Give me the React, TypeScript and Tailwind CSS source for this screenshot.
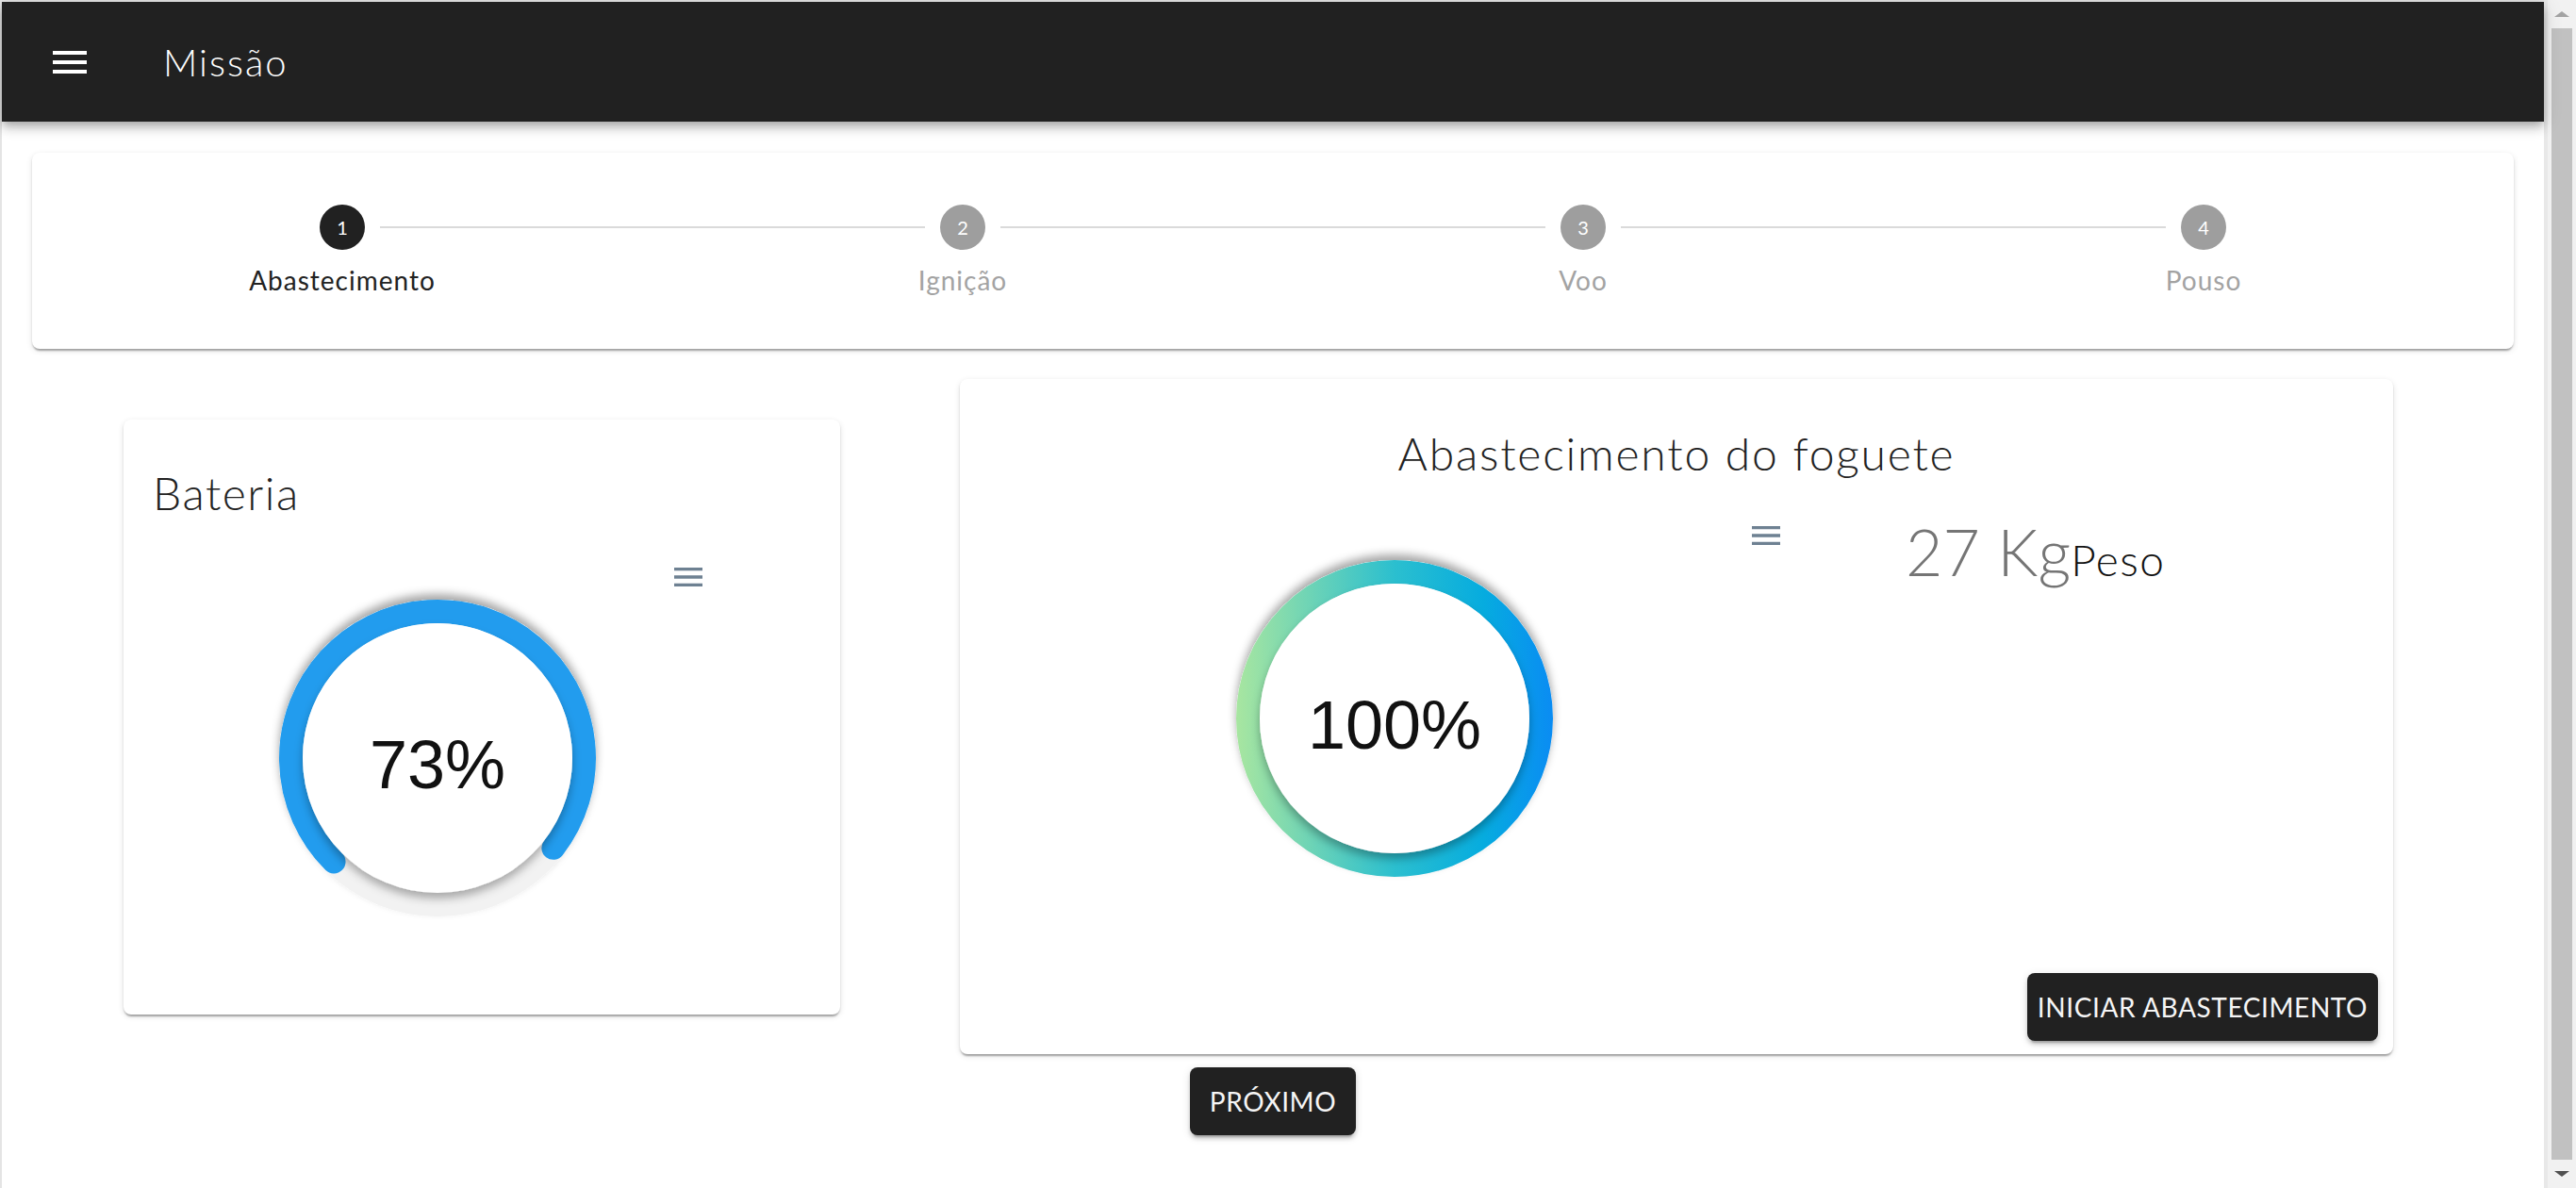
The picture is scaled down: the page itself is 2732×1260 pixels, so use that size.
import { useId } from "react"

const MENU_PATH = "M3 18h18v-2H3v2zm0-5h18v-2H3v2zm0-7v2h18V6H3z"

const MenuIcon = ({ size, color }: { size: number, color: string }) => (
    <svg width={size} height={size} viewBox="0 0 24 24" fill={color}>
        <path d={MENU_PATH} />
    </svg>
)

interface IGauge {
    value: number,
    gradient?: boolean
}

// radial bar, drawn the way apexcharts does it (track, bar, hollow with shadow)
const Gauge = (props: IGauge) => {
    const { value, gradient } = props
    const id = useId().replace(/:/g, "")
    const c = 200
    const r = 155.5
    const start = -135
    const end = start + value * 3.6
    const pt = (deg: number) => {
        const a = (deg * Math.PI) / 180
        return `${(c + r * Math.sin(a)).toFixed(2)} ${(c - r * Math.cos(a)).toFixed(2)}`
    }
    const arc = `M ${pt(start)} A ${r} ${r} 0 ${value * 3.6 > 180 ? 1 : 0} 1 ${pt(end)}`
    return (
        <svg width={400} height={400} viewBox="0 0 400 400">
            <defs>
                <filter id={`${id}track`} x="-20%" y="-20%" width="140%" height="140%">
                    <feDropShadow dx="0" dy="-6" stdDeviation="5" floodColor="#000" floodOpacity="0.35" />
                </filter>
                <filter id={`${id}hollow`} x="-20%" y="-20%" width="140%" height="140%">
                    <feDropShadow dx="0" dy="6" stdDeviation="5" floodColor="#000" floodOpacity="0.3" />
                </filter>
                <linearGradient id={`${id}grad`} gradientUnits="userSpaceOnUse" x1="32" y1="0" x2="368" y2="0">
                    <stop offset="0" stopColor="#a8e6a0" />
                    <stop offset="0.5" stopColor="#2bbfcf" />
                    <stop offset="0.78" stopColor="#06acdf" />
                    <stop offset="1" stopColor="#0a8cf3" />
                </linearGradient>
            </defs>
            <circle cx={c} cy={c} r={r} fill="none" stroke="#f2f2f2" strokeWidth={25} filter={`url(#${id}track)`} />
            {gradient
                ? <circle cx={c} cy={c} r={r} fill="none" stroke={`url(#${id}grad)`} strokeWidth={25} />
                : <path d={arc} fill="none" stroke="#229cee" strokeWidth={25} strokeLinecap="round" />}
            <circle cx={c} cy={c} r={143} fill="#fff" filter={`url(#${id}hollow)`} />
            <text x={c} y={232} textAnchor="middle" fontSize={72} fill="#111" className="font-['Liberation_Sans',Arial,sans-serif]">
                {value}%
            </text>
        </svg>
    )
}

const steps = ["Abastecimento", "Ignição", "Voo", "Pouso"]

const Stepper = ({ active }: { active: number }) => {
    return (
        <div className="bg-white rounded-[8px] shadow-[0_4px_2px_-2px_rgba(0,0,0,0.2),0_2px_2px_0_rgba(0,0,0,0.14),0_2px_6px_0_rgba(0,0,0,0.12)] grid grid-cols-4 pt-[55px] pb-[53px]">
            {steps.map((step, index) => {
                const done = index === active
                return (
                    <div key={step} className="flex flex-col items-center">
                        <div className="flex items-center w-full">
                            <div className={`flex-1 h-[2px] mr-[16px] ${index === 0 ? '' : 'bg-[#dadada]'}`} />
                            <div className={`w-[48px] h-[48px] rounded-full flex items-center justify-center text-white text-[20px] ${done ? 'bg-[#212121]' : 'bg-[#9e9e9e]'}`}>
                                {index + 1}
                            </div>
                            <div className={`flex-1 h-[2px] ml-[16px] ${index === steps.length - 1 ? '' : 'bg-[#dadada]'}`} />
                        </div>
                        <span className={`mt-[12px] text-[28px] leading-[40px] tracking-[1px] ${done ? 'text-[#222]' : 'text-[#a3a3a3]'}`}>{step}</span>
                    </div>
                )
            })}
        </div>
    )
}

const cardShadow = "shadow-[0_4px_2px_-2px_rgba(0,0,0,0.2),0_2px_2px_0_rgba(0,0,0,0.14),0_2px_6px_0_rgba(0,0,0,0.12)]"
const buttonClass = "h-[72px] rounded-[8px] bg-[#212121] text-[#f5f5f5] text-[28px] font-normal tracking-[0.6px] uppercase shadow-[0_6px_2px_-4px_rgba(0,0,0,0.2),0_4px_4px_0_rgba(0,0,0,0.14),0_2px_10px_0_rgba(0,0,0,0.12)]"

const App = () => {
    return (
        <div className="flex w-[2732px] h-[1260px] overflow-hidden bg-white font-['Lato','Open_Sans',sans-serif]">
            <div className="w-[2698px] flex flex-col border-l-2 border-t-2 border-[#e4e4e4]">
                <header className="relative z-10 h-[127px] shrink-0 bg-[#212121] flex items-center shadow-[0_4px_8px_-2px_rgba(0,0,0,0.2),0_8px_10px_0_rgba(0,0,0,0.14),0_2px_20px_0_rgba(0,0,0,0.12)]">
                    <div className="ml-[48px]">
                        <MenuIcon size={48} color="#fff" />
                    </div>
                    <h1 className="ml-[75px] text-[40px] leading-none font-light tracking-[2px] text-white">Missão</h1>
                </header>

                <main className="flex flex-col px-[32px] pt-[33px]">
                    <Stepper active={0} />

                    <div className="flex items-center pl-[97px] gap-[127px] mt-[32px]">
                        <div className={`w-[760px] h-[631px] bg-white rounded-[8px] flex flex-col ${cardShadow}`}>
                            <h2 className="pt-[46px] pl-[31px] text-[48px] leading-[64px] font-light tracking-[1.5px] text-[#222]">Bateria</h2>
                            <div className="relative flex-1">
                                <div className="ml-[133px] mt-[49px]">
                                    <Gauge value={73} />
                                </div>
                                <div className="absolute left-[579px] top-[37px]">
                                    <MenuIcon size={40} color="#6e8192" />
                                </div>
                            </div>
                        </div>

                        <div className={`w-[1520px] h-[716px] bg-white rounded-[8px] flex flex-col ${cardShadow}`}>
                            <h2 className="pt-[47px] text-center text-[48px] leading-[64px] font-light tracking-[1.8px] text-[#222]">Abastecimento do foguete</h2>
                            <div className="flex flex-1">
                                <div className="relative w-[878px]">
                                    <div className="ml-[261px] mt-[49px]">
                                        <Gauge value={100} gradient />
                                    </div>
                                    <div className="absolute left-[835px] top-[35px]">
                                        <MenuIcon size={40} color="#6e8192" />
                                    </div>
                                </div>
                                <div className="ml-[125px] mt-[38px] flex items-baseline h-fit">
                                    <span className="text-[68px] leading-none font-light text-[#757575]">27 Kg</span>
                                    <span className="text-[46px] leading-none font-light tracking-[1.4px] text-[#111]">Peso</span>
                                </div>
                            </div>
                            <div className="flex justify-end pr-[16px] pb-[14px]">
                                <button className={`w-[372px] ${buttonClass}`}>
                                    Iniciar abastecimento
                                </button>
                            </div>
                        </div>
                    </div>

                    <div className="flex justify-center mt-[14px]">
                        <button className={`w-[176px] ${buttonClass}`}>
                            Próximo
                        </button>
                    </div>
                </main>
            </div>

            <div className="w-[34px] h-full flex flex-col border-l-4 border-[#e8e8e8] bg-[#f1f1f1]">
                <div className="h-[30px] flex items-center justify-center">
                    <div className="w-0 h-0 border-x-[8px] border-x-transparent border-b-[6px] border-b-[#a3a3a3]" />
                </div>
                <div className="flex-1 mx-[4px] bg-[#c1c1c1]" />
                <div className="h-[30px] flex items-center justify-center">
                    <div className="w-0 h-0 border-x-[8px] border-x-transparent border-t-[6px] border-t-[#505050]" />
                </div>
            </div>
        </div>
    )
}
export default App
